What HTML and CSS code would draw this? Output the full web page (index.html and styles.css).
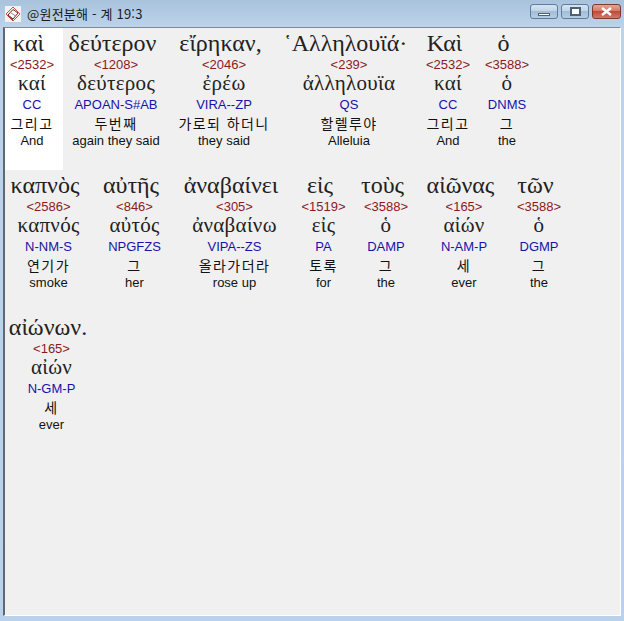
FILE: index.html
```html
<!DOCTYPE html>
<html lang="ko">

<head>
  <meta charset="UTF-8">
  <title>@원전분해 - 계 19:3</title>
  <meta name="viewport" content="width=device-width, initial-scale=1">
  <link rel="stylesheet" href="styles.css">
</head>

<body>
  <div class="window">
    <header class="titlebar">
      <svg class="app-icon" viewBox="0 0 16 16" aria-hidden="true">
        <rect width="16" height="16" fill="#f6f2ee" />
        <path d="M8 1 15 8 8 15 1 8Z" fill="none" stroke="#d84a4a" stroke-width="1" />
        <path d="M3 9 8 3.500 13 7 8 13Z" fill="#fff" stroke="#4a3030" stroke-width="1" />
        <path d="M3 9 8 13 8 14.500 2.500 10Z" fill="#a03030" />
        <path d="M5.500 6.500 10.500 10" stroke="#a08080" stroke-width="1" />
      </svg>
      <span class="title-text">@원전분해 - 계 19:3</span>
      <div class="window-controls">
        <button class="ctl ctl-min"><span class="glyph-min"></span></button>
        <button class="ctl ctl-max"><span class="glyph-max"></span></button>
        <button class="ctl ctl-close">
          <svg class="glyph-close" viewBox="0 0 13 9" aria-hidden="true">
            <path d="M2 1 11 8M11 1 2 8" stroke="#fff" stroke-width="2.400" />
          </svg>
        </button>
      </div>
    </header>

    <main class="client">
      <section class="line line-1">
        <div class="word word-active">
          <div class="greek">καὶ</div>
          <div class="strong">&lt;2532&gt;</div>
          <div class="lemma">καί</div>
          <div class="morph">CC</div>
          <div class="korean">그리고</div>
          <div class="gloss">And</div>
        </div>
        <div class="word">
          <div class="greek">δεύτερον</div>
          <div class="strong">&lt;1208&gt;</div>
          <div class="lemma">δεύτερος</div>
          <div class="morph">APOAN-S#AB</div>
          <div class="korean">두번째</div>
          <div class="gloss">again they said</div>
        </div>
        <div class="word">
          <div class="greek">εἴρηκαν,</div>
          <div class="strong">&lt;2046&gt;</div>
          <div class="lemma">ἐρέω</div>
          <div class="morph">VIRA--ZP</div>
          <div class="korean">가로되 하더니</div>
          <div class="gloss">they said</div>
        </div>
        <div class="word">
          <div class="greek">῾Αλληλουϊά·</div>
          <div class="strong">&lt;239&gt;</div>
          <div class="lemma">ἀλληλουϊα</div>
          <div class="morph">QS</div>
          <div class="korean">할렐루야</div>
          <div class="gloss">Alleluia</div>
        </div>
        <div class="word">
          <div class="greek">Καὶ</div>
          <div class="strong">&lt;2532&gt;</div>
          <div class="lemma">καί</div>
          <div class="morph">CC</div>
          <div class="korean">그리고</div>
          <div class="gloss">And</div>
        </div>
        <div class="word">
          <div class="greek">ὁ</div>
          <div class="strong">&lt;3588&gt;</div>
          <div class="lemma">ὁ</div>
          <div class="morph">DNMS</div>
          <div class="korean">그</div>
          <div class="gloss">the</div>
        </div>
      </section>

      <section class="line line-2">
        <div class="word">
          <div class="greek">καπνὸς</div>
          <div class="strong">&lt;2586&gt;</div>
          <div class="lemma">καπνός</div>
          <div class="morph">N-NM-S</div>
          <div class="korean">연기가</div>
          <div class="gloss">smoke</div>
        </div>
        <div class="word">
          <div class="greek">αὐτῆς</div>
          <div class="strong">&lt;846&gt;</div>
          <div class="lemma">αὐτός</div>
          <div class="morph">NPGFZS</div>
          <div class="korean">그</div>
          <div class="gloss">her</div>
        </div>
        <div class="word">
          <div class="greek">ἀναβαίνει</div>
          <div class="strong">&lt;305&gt;</div>
          <div class="lemma">ἀναβαίνω</div>
          <div class="morph">VIPA--ZS</div>
          <div class="korean">올라가더라</div>
          <div class="gloss">rose up</div>
        </div>
        <div class="word">
          <div class="greek">εἰς</div>
          <div class="strong">&lt;1519&gt;</div>
          <div class="lemma">εἰς</div>
          <div class="morph">PA</div>
          <div class="korean">토록</div>
          <div class="gloss">for</div>
        </div>
        <div class="word">
          <div class="greek">τοὺς</div>
          <div class="strong">&lt;3588&gt;</div>
          <div class="lemma">ὁ</div>
          <div class="morph">DAMP</div>
          <div class="korean">그</div>
          <div class="gloss">the</div>
        </div>
        <div class="word">
          <div class="greek">αἰῶνας</div>
          <div class="strong">&lt;165&gt;</div>
          <div class="lemma">αἰών</div>
          <div class="morph">N-AM-P</div>
          <div class="korean">세</div>
          <div class="gloss">ever</div>
        </div>
        <div class="word">
          <div class="greek">τῶν</div>
          <div class="strong">&lt;3588&gt;</div>
          <div class="lemma">ὁ</div>
          <div class="morph">DGMP</div>
          <div class="korean">그</div>
          <div class="gloss">the</div>
        </div>
      </section>

      <section class="line line-3">
        <div class="word">
          <div class="greek">αἰώνων.</div>
          <div class="strong">&lt;165&gt;</div>
          <div class="lemma">αἰών</div>
          <div class="morph">N-GM-P</div>
          <div class="korean">세</div>
          <div class="gloss">ever</div>
        </div>
      </section>
    </main>
  </div>
</body>

</html>
```

FILE: styles.css
```css
html,
body {
  margin: 0;
  height: 100%;
  overflow: hidden;
}

body {
  font-family: "Liberation Sans", Arial, sans-serif;
  background: #b9d1ea;
}

.window {
  display: flex;
  flex-direction: column;
  height: 621px;
  padding: 0 3px 5px 3px;
  box-sizing: border-box;
  background: linear-gradient(#a9c3dd 0, #bcd3ea 27px, #b9d1ea 100%);
}

.titlebar {
  display: flex;
  align-items: center;
  flex: 0 0 27px;
  padding-left: 2px;
  box-sizing: border-box;
}

.app-icon {
  width: 16px;
  height: 16px;
  margin: 0 6px 0 0;
}

.title-text {
  font-family: "Noto Sans CJK KR", sans-serif;
  font-size: 13px;
  letter-spacing: 0.2px;
  color: #1a1a1a;
  white-space: nowrap;
}

.window-controls {
  display: flex;
  gap: 3px;
  margin-left: auto;
  margin-bottom: 4px;
}

.ctl {
  display: flex;
  align-items: center;
  justify-content: center;
  width: 28px;
  height: 15px;
  padding: 0;
  border: 1px solid #5d7c9e;
  border-radius: 3px;
  background: linear-gradient(#d6e4f1 0, #c1d5e8 45%, #a3bdd6 50%, #b5cde3 100%);
}

.ctl-close {
  width: 29px;
  border-color: #7a3a30;
  background: linear-gradient(#e6a593 0, #d57a66 45%, #c04a35 50%, #cf7b68 100%);
}

.glyph-min {
  width: 12px;
  height: 3px;
  border: 1px solid #4d6075;
  background: #fff;
  box-sizing: border-box;
  margin-top: 5px;
}

.glyph-max {
  width: 11px;
  height: 9px;
  border: 2px solid #4d6075;
  background: #fff;
  box-sizing: border-box;
}

.glyph-close {
  width: 13px;
  height: 9px;
}

.client {
  flex: 1;
  display: flex;
  flex-direction: column;
  background: #f0f0f0;
  border-top: 1px solid #7d8a96;
  border-left: 2px solid #5d6a76;
  border-bottom: 1px solid #fff;
  border-right: 1px solid #fff;
  overflow: hidden;
}

.line {
  display: grid;
  height: 142px;
  justify-content: start;
}

.line-1 {
  grid-template-columns: 58px 106px 110px 140px 58px 60px;
}

.line-2 {
  grid-template-columns: 87px 85px 115px 63px 62px 94px 56px;
}

.line-3 {
  grid-template-columns: 93px;
}

.word {
  display: flex;
  flex-direction: column;
  align-items: center;
  white-space: nowrap;
  min-width: 0;
}

.word-active {
  background: #fff;
  padding-right: 4px;
}

.greek {
  font-family: "Liberation Serif", serif;
  font-size: 24px;
  line-height: 28px;
  margin-top: 1px;
  padding-right: 7px;
  color: #222;
}

.strong {
  font-size: 13px;
  line-height: 14px;
  margin-top: 1px;
  color: #8b1a1a;
}

.lemma {
  font-family: "Liberation Serif", serif;
  font-size: 21px;
  letter-spacing: 0.3px;
  line-height: 24px;
  margin-top: -1px;
  color: #222;
}

.morph {
  font-size: 13px;
  line-height: 14px;
  margin-top: 3px;
  color: #1414a8;
}

.korean {
  font-family: "Noto Sans CJK KR", sans-serif;
  font-size: 14px;
  letter-spacing: 1.4px;
  line-height: 20px;
  margin-top: 1px;
  color: #111;
}

.gloss {
  font-size: 13px;
  line-height: 14px;
  margin-top: 1px;
  color: #111;
}
```
